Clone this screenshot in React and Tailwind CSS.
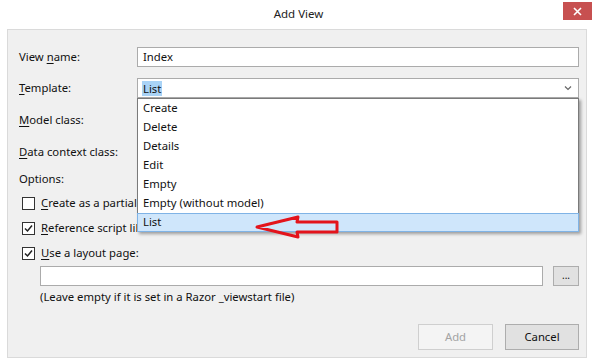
import React from 'react'

const items = ['Create', 'Delete', 'Details', 'Edit', 'Empty', 'Empty (without model)', 'List']

const Key = ({ children }) => <span className="underline underline-offset-2">{children}</span>

const Checkbox = ({ checked }) => (
  <div className="w-[13px] h-[13px] border border-[#333] bg-white flex items-center justify-center shrink-0">
    {checked && (
      <svg width="11" height="11" viewBox="0 0 11 11">
        <path d="M2 5.5 L4.5 8 L9 2.5" fill="none" stroke="#222" strokeWidth="1.5" />
      </svg>
    )}
  </div>
)

const App = () => {
  return (
    <div
      className="w-[597px] h-[361px] bg-white relative overflow-hidden text-[11.3px] text-[#111]"
      style={{ fontFamily: '"Noto Sans", "Liberation Sans", sans-serif' }}
    >
      {/* title bar */}
      <div className="h-[29px] grid grid-cols-[1fr_auto_1fr] items-center">
        <div />
        <div className="text-[11.5px] text-[#222] pb-[2px]">Add View</div>
        <div className="flex justify-end pr-[5px] self-start pt-[2px]">
          <div className="w-[29px] h-[18px] bg-[#c75050] flex items-center justify-center">
            <svg width="9" height="9" viewBox="0 0 9 9">
              <path d="M1 1 L8 8 M8 1 L1 8" stroke="#fff" strokeWidth="1.6" />
            </svg>
          </div>
        </div>
      </div>

      {/* main panel */}
      <div className="ml-[7px] w-[580px] h-[329px] border border-[#dadada] bg-[#f0f0f0] pt-[17px] pl-[11px] pr-[7px] flex flex-col">
        <div className="flex items-center h-[20px]">
          <div className="w-[118px]">View <Key>n</Key>ame:</div>
          <div className="flex-1 h-[20px] bg-white border border-[#ababab] flex items-center pl-[5px]">Index</div>
        </div>

        <div className="flex items-center h-[20px] mt-[11px]">
          <div className="w-[118px]"><Key>T</Key>emplate:</div>
          <div className="flex-1 h-[20px] relative">
            <div className="h-full bg-white border border-[#ababab] flex items-center pl-[4px] pr-[6px]">
              <span className="bg-[#a9d3f6] px-[1px] leading-[15px]">List</span>
              <div className="flex-1" />
              <svg width="8" height="6" viewBox="0 0 8 6">
                <path d="M1 1.5 L4 4.5 L7 1.5" fill="none" stroke="#666" strokeWidth="1.2" />
              </svg>
            </div>
            <div className="absolute left-0 right-0 top-[20px] bg-white border border-[#7a7a7a] shadow-[2px_2px_3px_rgba(0,0,0,0.35)] z-10">
              {items.map((item) => (
                <div
                  key={item}
                  className={
                    item === 'List'
                      ? 'h-[19px] flex items-center pl-[5px] bg-[#cfe6fb] border border-[#7fb3e6] -mx-[1px] -mb-[1px]'
                      : 'h-[19px] flex items-center pl-[5px]'
                  }
                >
                  {item}
                </div>
              ))}
            </div>
          </div>
        </div>

        <div className="flex items-center h-[20px] mt-[12px]">
          <Key>M</Key>odel class:
        </div>
        <div className="flex items-center h-[20px] mt-[12px]">
          <Key>D</Key>ata context class:
        </div>
        <div className="flex items-center h-[20px] mt-[7px]">Options:</div>

        {/* the open list covers the right part of these labels */}
        <div className="flex items-center h-[20px] mt-[4px] pl-[3px] gap-[6px]">
          <Checkbox checked={false} />
          <span className="w-[99px] overflow-hidden whitespace-nowrap"><Key>C</Key>reate as a partial view</span>
        </div>
        <div className="flex items-center h-[20px] mt-[5px] pl-[3px] gap-[6px]">
          <Checkbox checked />
          <span className="w-[99px] overflow-hidden whitespace-nowrap"><Key>R</Key>eference script libraries</span>
        </div>
        <div className="flex items-center h-[20px] mt-[5px] pl-[3px] gap-[6px]">
          <Checkbox checked />
          <span><Key>U</Key>se a layout page:</span>
        </div>

        <div className="flex items-center h-[20px] mt-[3px] pl-[21px] gap-[10px]">
          <div className="flex-1 h-[20px] bg-white border border-[#ababab]" />
          <div className="w-[26px] h-[20px] bg-[#e1e1e1] border border-[#adadad] flex items-center justify-center text-[10px] leading-none pb-[3px]">...</div>
        </div>

        <div className="h-[18px] mt-[2px] pl-[21px] flex items-center">
          (Leave empty if it is set in a Razor _viewstart file)
        </div>

        <div className="flex justify-end gap-[12px] mt-[18px]">
          <div className="w-[75px] h-[26px] border border-[#cfcfcf] bg-[#f4f4f4] text-[#a3a3a3] flex items-center justify-center">Add</div>
          <div className="w-[74px] h-[26px] border border-[#adadad] bg-[#e1e1e1] flex items-center justify-center">Cancel</div>
        </div>
      </div>

      {/* red annotation arrow */}
      <svg className="absolute left-0 top-0 z-20 pointer-events-none" width="597" height="361">
        <polygon
          points="257,227 298,217 297,222 337,222 337,232 297,232 298,237"
          fill="none"
          stroke="#e3141c"
          strokeWidth="3"
          strokeLinejoin="round"
        />
      </svg>
    </div>
  )
}

export default App
